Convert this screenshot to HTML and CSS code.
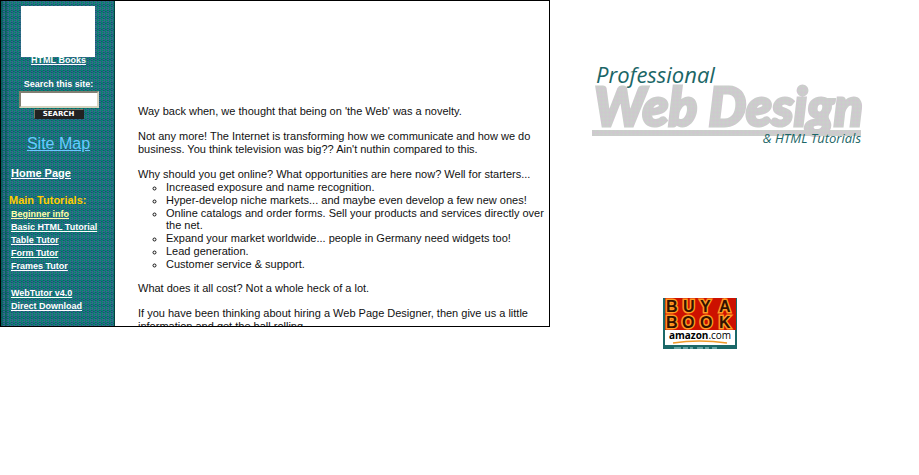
FILE: index.html
```html
<!DOCTYPE html>
<html lang="en">
<head>
<meta charset="utf-8">
<title>Professional Web Design &amp; HTML Tutorials</title>
<link rel="stylesheet" href="styles.css">
</head>
<body>
<div class="page">
  <div class="panel">
    <nav class="sidebar">
      <div class="blank"></div>
      <a class="books" href="#">HTML Books</a>
      <form class="search">
        <label for="q">Search this site:</label>
        <input id="q" type="text">
        <button type="button">SEARCH</button>
      </form>
      <a class="sitemap" href="#">Site Map</a>
      <a class="home" href="#">Home Page</a>
      <h2>Main Tutorials:</h2>
      <ul class="links">
        <li><a class="current" href="#">Beginner info</a></li>
        <li><a href="#">Basic HTML Tutorial</a></li>
        <li><a href="#">Table Tutor</a></li>
        <li><a href="#">Form Tutor</a></li>
        <li><a href="#">Frames Tutor</a></li>
      </ul>
      <ul class="links">
        <li><a href="#">WebTutor v4.0</a></li>
        <li><a href="#">Direct Download</a></li>
      </ul>
    </nav>
    <main class="content">
      <p>Way back when, we thought that being on 'the Web' was a novelty.</p>
      <p>Not any more! The Internet is transforming how we communicate and how we do business. You think television was big?? Ain't nuthin compared to this.</p>
      <p class="lead">Why should you get online? What opportunities are here now? Well for starters...</p>
      <ul class="points">
        <li>Increased exposure and name recognition.</li>
        <li>Hyper-develop niche markets... and maybe even develop a few new ones!</li>
        <li>Online catalogs and order forms. Sell your products and services directly over the net.</li>
        <li>Expand your market worldwide... people in Germany need widgets too!</li>
        <li>Lead generation.</li>
        <li>Customer service &amp; support.</li>
      </ul>
      <p>What does it all cost? Not a whole heck of a lot.</p>
      <p>If you have been thinking about hiring a Web Page Designer, then give us a little information and get the ball rolling.</p>
    </main>
  </div>
  <aside class="brand">
    <svg class="logo" width="272" height="84" viewBox="0 0 272 84" role="img" aria-label="Professional Web Design and HTML Tutorials">
      <defs>
        <pattern id="grain" width="4" height="4" patternUnits="userSpaceOnUse">
          <rect width="4" height="4" fill="#cccccc"/>
          <rect x="1" y="0" width="1" height="1" fill="#d8bcd8"/>
          <rect x="3" y="2" width="1" height="1" fill="#c6d6c8"/>
        </pattern>
      </defs>
      <rect x="0" y="66" width="269" height="6" fill="url(#grain)"/>
      <text class="logo-main" x="2" y="62" fill="url(#grain)" stroke="url(#grain)">Web Design</text>
      <text class="logo-top" x="4" y="19">Professional</text>
      <text class="logo-sub" x="269" y="79" text-anchor="end">&amp; HTML Tutorials</text>
    </svg>
    <a class="amazon" href="#" aria-label="Buy a book at amazon.com">
      <svg width="74" height="51" viewBox="0 0 74 51">
        <rect width="74" height="51" fill="#1b6868"/>
        <rect x="2" width="71" height="32" fill="#cc1100"/>
        <g class="amazon-big">
          <text x="3 20 37 56" y="14">BUYA</text>
          <text x="3 19 37 56" y="30">BOOK</text>
        </g>
        <rect x="2" y="32" width="70" height="15" fill="#ffffff"/>
        <text class="amazon-name" x="37" y="41" text-anchor="middle">amazon<tspan class="amazon-com">.com</tspan></text>
        <path d="M10 45Q36 41 64 45" fill="none" stroke="#f09a28" stroke-width="1.5"/>
        <path d="M11 50h7m2 0h5m2 0h3m4 0h6m2 0h4m3 0h5" stroke="#b5dede"/>
      </svg>
    </a>
  </aside>
</div>
</body>
</html>
```
FILE: styles.css
```css
* { box-sizing: border-box; }
body {
  margin: 0;
  background: #fff;
  color: #111;
  font-family: "Liberation Sans", Arial, sans-serif;
  font-size: 11px;
  line-height: 13px;
}
p, ul, h2 { margin: 0; padding: 0; }
ul { list-style: none; }
.page {
  display: grid;
  grid-template-columns: minmax(0, 3fr) minmax(0, 2fr);
  align-items: start;
}
.panel {
  display: grid;
  grid-template-columns: 114px minmax(0, 1fr);
  height: 327px;
  overflow: hidden;
  border: 1px solid #000;
  margin-right: 1px;
}
.sidebar {
  display: flex;
  flex-direction: column;
  align-items: flex-start;
  padding: 5px 8px 0 10px;
  border-right: 1px solid #073c3c;
  background-color: #1b6b6b;
  background-image:
    linear-gradient(90deg, rgba(0, 50, 60, .35) 0 2px, transparent 2px 4px, rgba(0, 50, 60, .3) 4px 6px, transparent 6px),
    conic-gradient(#336699 25%, transparent 0 50%, #008877 0 75%, transparent 0),
    conic-gradient(#33777a 25%, transparent 0 50%, #125a66 0 75%, transparent 0);
  background-size: auto, 4px 2px, 2px 6px;
  font-size: 9px;
  font-weight: bold;
}
.sidebar a { color: #fff; }
.blank {
  width: 74px;
  height: 51px;
  margin-left: 10px;
  background: #fff;
  flex: none;
}
.books {
  align-self: center;
  margin-top: -3px;
  line-height: 12px;
}
.search {
  display: flex;
  flex-direction: column;
  align-items: center;
  align-self: center;
  margin-top: 12px;
  color: #fff;
}
.search input {
  width: 80px;
  height: 17px;
  padding: 0 2px;
  border: 2px inset #d6d3be;
  background: #fff;
}
.search button {
  width: 50px;
  height: 10px;
  margin-top: 1px;
  padding: 0;
  border: 1px outset #776;
  background: #222;
  color: #fff;
  font: bold 7px/8px "DejaVu Sans", sans-serif;
}
.sidebar .sitemap {
  align-self: center;
  margin-top: 15px;
  color: #66ccff;
  font-size: 16px;
  font-weight: normal;
  line-height: 20px;
}
.sidebar .home {
  margin-top: 13px;
  font-size: 11px;
}
.sidebar h2 {
  margin: 14px 0 1px -2px;
  color: #ffcc00;
  font-size: 11px;
  line-height: 13px;
}
.links { margin-bottom: 14px; }
.links li { line-height: 13px; white-space: nowrap; }
.sidebar .current { color: #ffffaa; }
.content { padding: 104px 4px 0 23px; }
.content p { margin-bottom: 12px; }
.content .lead { margin-bottom: 0; }
.points {
  list-style: circle;
  margin-bottom: 12px;
  padding-left: 28px;
  line-height: 12px;
}
.points li + li { margin-top: 1px; }
.brand {
  display: flex;
  flex-direction: column;
  align-items: flex-start;
  padding: 64px 0 0 41px;
}
.logo { overflow: visible; max-width: 100%; }
.logo text { font-style: italic; }
.logo-main { font-family: Lato, sans-serif; font-weight: 900; font-size: 53px; stroke-width: 3px; }
.logo-top { font-family: "Open Sans", sans-serif; font-size: 22px; fill: #1b6666; }
.logo-sub { font-family: "Open Sans", sans-serif; font-size: 13px; fill: #1b6666; }
.amazon { display: block; margin: 150px 0 0 71px; }
.amazon svg { display: block; }
.amazon-big {
  fill: #331100;
  stroke: #ff9922;
  stroke-width: 3px;
  paint-order: stroke;
  font: bold 16px "Liberation Sans", sans-serif;
}
.amazon-name { font: bold 10px "Open Sans", sans-serif; }
.amazon-com { font-weight: normal; }
```
